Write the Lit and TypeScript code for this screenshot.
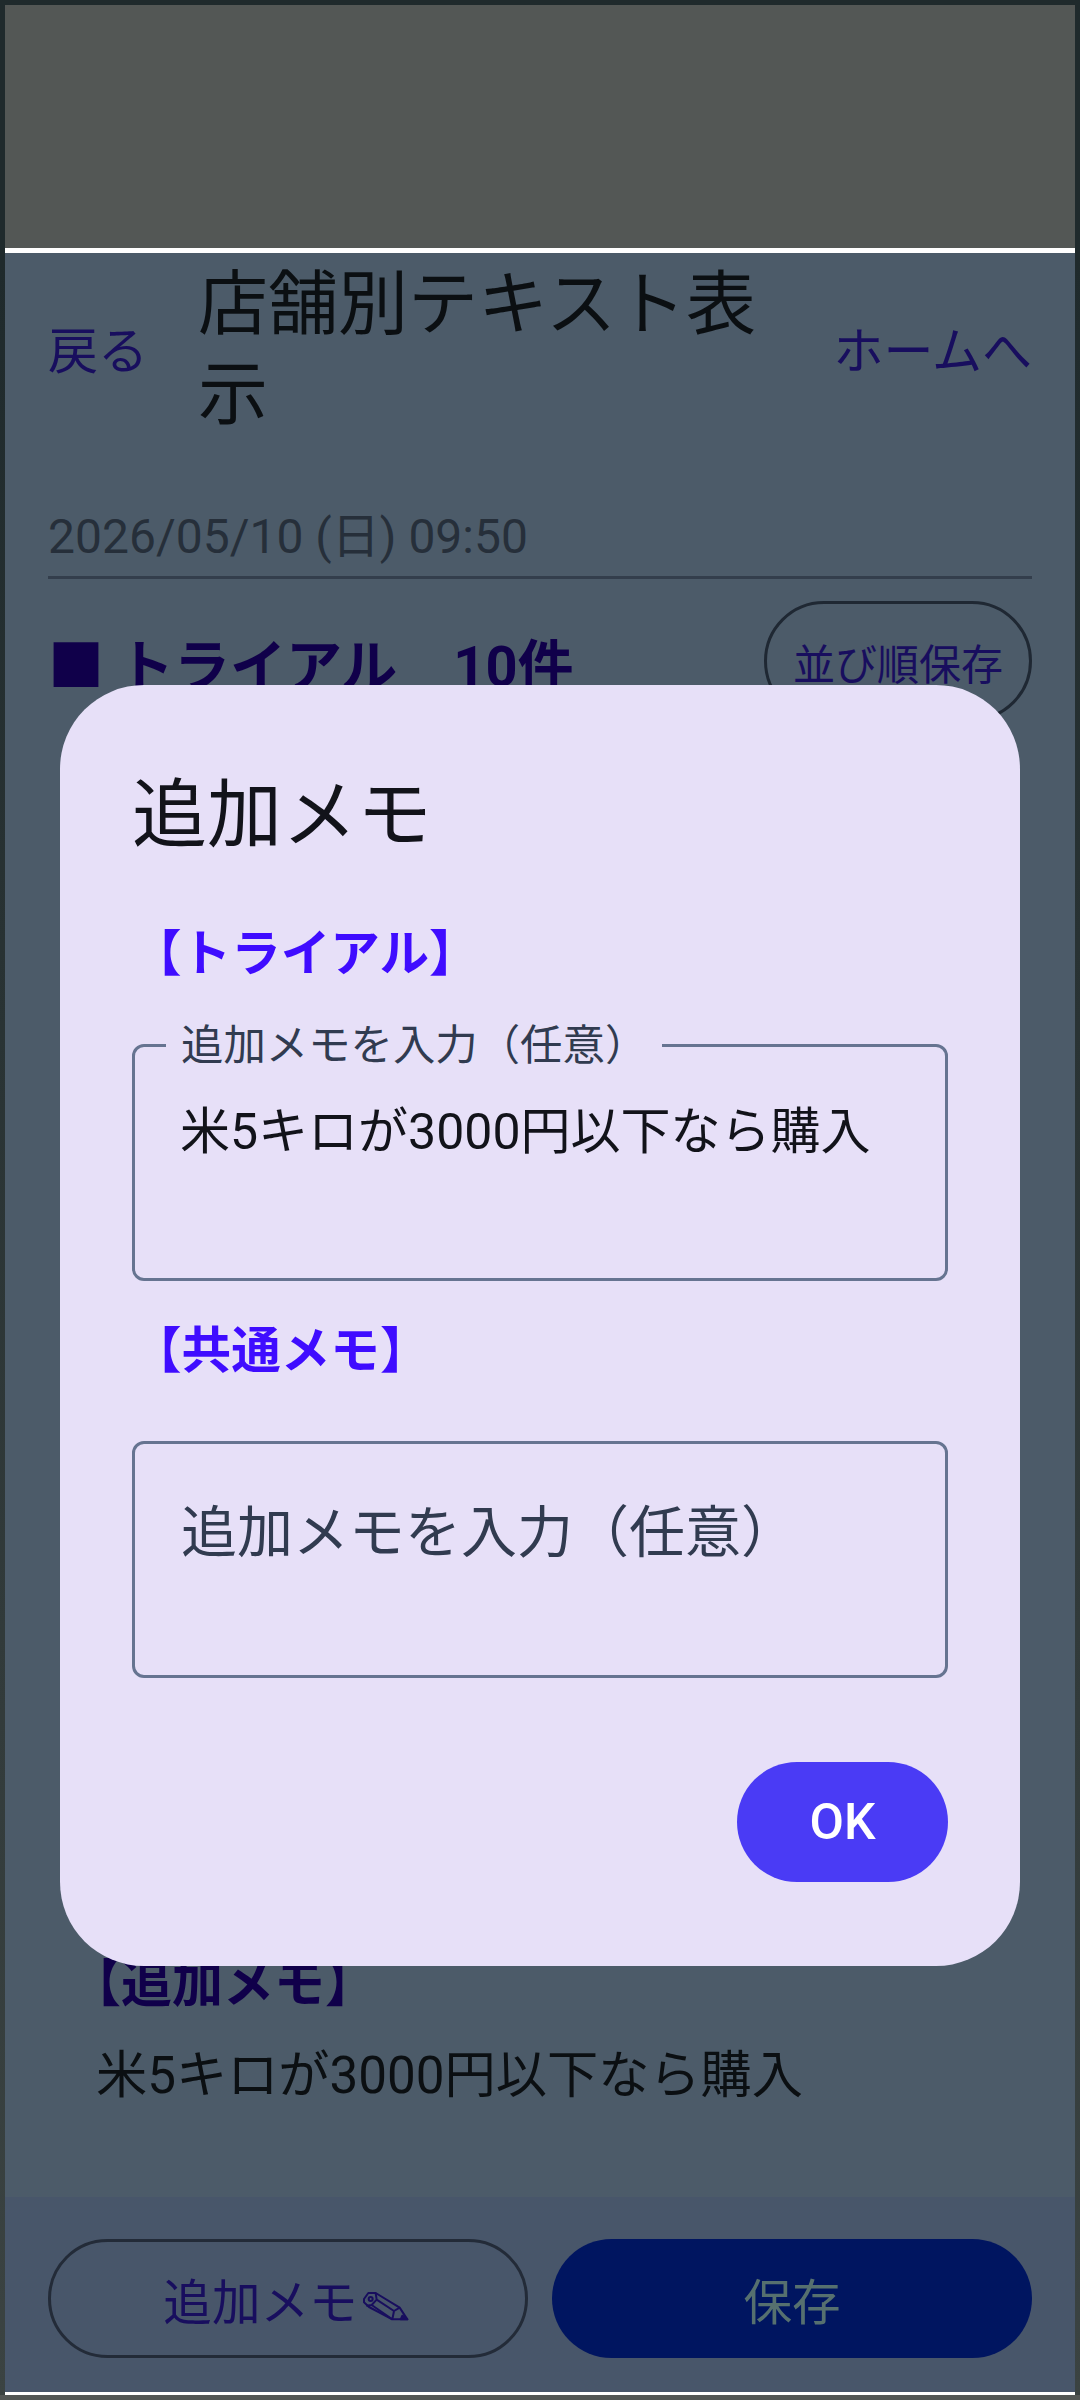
import { LitElement, html, css } from "lit";
import { customElement } from "lit/decorators.js";

@customElement("app-root")
export class AppRoot extends LitElement {
  static styles = css`
    :host {
      display: block;
      width: 1080px;
      height: 2400px;
      position: relative;
      overflow: hidden;
      background: #535755;
      font-family: Roboto, "Noto Sans CJK JP", sans-serif;
      color: #0b0f12;
    }
    .frame {
      box-sizing: border-box;
      height: 2400px;
      display: flex;
      flex-direction: column;
      padding: 5px 5px 0;
      background: linear-gradient(#1f2a2c 0, #1f2a2c 260px, #3b4342 100%);
    }
    .status { height: 243px; background: #535755; flex: none; }
    .rule { height: 5px; background: #fff; flex: none; }
    .page {
      flex: 1;
      min-height: 0;
      display: flex;
      flex-direction: column;
      background: #4c5b69;
    }
    .head {
      display: flex;
      align-items: center;
      padding: 0 43px;
      height: 195px;
      flex: none;
    }
    .link { font-size: 50px; color: #180e5e; white-space: nowrap; line-height: 60px; margin-top: 3px; }
    .title {
      flex: 1;
      font-size: 70px;
      line-height: 90px;
      padding: 0 60px 0 50px;
      margin-top: -2px;
    }
    .date {
      margin: 63px 43px 0;
      padding-bottom: 13px;
      border-bottom: 3px solid #333e4c;
      font-size: 48px;
      line-height: 52px;
      color: #262f3a;
    }
    .section {
      display: flex;
      align-items: flex-start;
      justify-content: space-between;
      padding: 22px 43px 0;
    }
    .section-title {
      font-size: 56px;
      line-height: 70px;
      font-weight: 700;
      color: #10004a;
      margin-top: 31px;
      white-space: pre;
    }
    .pill {
      box-sizing: border-box;
      border: 3px solid #1f2833;
      border-radius: 60px;
      height: 120px;
      width: 268px;
      display: flex;
      align-items: center;
      justify-content: center;
      font-size: 42px;
      color: #180e5e;
    }
    .spacer { flex: 1; }
    .memo { padding: 0 0 86px 91px; }
    .memo-label { font-size: 51px; line-height: 60px; font-weight: 700; color: #10004a; margin-left: -26px; }
    .memo-text { font-size: 51.2px; line-height: 70px; margin-top: 26px; }
    .foot {
      flex: none;
      height: 195px;
      background: #48566a;
      display: grid;
      grid-template-columns: 480px 480px;
      column-gap: 24px;
      padding: 42px 0 0 43px;
      box-sizing: border-box;
    }
    .btn {
      box-sizing: border-box;
      height: 119px;
      border-radius: 60px;
      display: flex;
      align-items: center;
      justify-content: center;
      font-size: 48.6px;
    }
    .btn.outline { border: 3px solid #232b38; color: #180e5e; }
    .btn.fill { background: #001560; color: #56706f; }
    .pencil { width: 54px; height: 42px; margin: 14px 0 0 1px; flex: none; }
    .pencil path, .pencil circle { fill: none; stroke: #180e5e; stroke-width: 6; stroke-linejoin: round; }
    .pencil .tip { fill: #180e5e; }
    .end { height: 3px; background: #fff; flex: none; }
    .under { height: 5px; background: #535755; flex: none; margin: 0 -5px; }

    .dialog {
      position: absolute;
      left: 60px;
      top: 685px;
      width: 960px;
      height: 1281px;
      box-sizing: border-box;
      background: #e7e0f8;
      border-radius: 84px;
      padding: 72px;
      display: flex;
      flex-direction: column;
    }
    .d-title { font-size: 75px; line-height: 96px; color: #12131a; margin-top: 10px; }
    .d-label {
      font-size: 49.6px;
      line-height: 60px;
      font-weight: 700;
      color: #3f0cff;
    }
    .first-label { margin-top: 61px; }
    .first-field { margin-top: 60px; }
    .second-label { margin-top: 40px; }
    .second-field { margin-top: 60px; }
    .field {
      box-sizing: border-box;
      height: 237px;
      border: 3px solid #667491;
      border-radius: 12px;
      padding: 0 46px;
      position: relative;
    }
    .float {
      position: absolute;
      top: -28px;
      left: 31px;
      padding: 0 15px;
      background: #e7e0f8;
      font-size: 42.4px;
      line-height: 54px;
      color: #313b50;
      white-space: nowrap;
    }
    .value { font-size: 50px; line-height: 70px; color: #12131a; margin-top: 50px; margin-left: -1px; }
    .ph { font-size: 56px; line-height: 72px; color: #313b50; margin-top: 53px; white-space: nowrap; }
    .actions { display: flex; justify-content: flex-end; margin-top: 84px; }
    .ok {
      width: 211px;
      height: 120px;
      border-radius: 60px;
      background: #4a3bf5;
      color: #fff;
      font-size: 50px;
      font-weight: 500;
      display: flex;
      align-items: center;
      justify-content: center;
    }
  `;

  render() {
    return html`
      <div class="frame">
        <div class="status"></div>
        <div class="rule"></div>
        <div class="page">
          <div class="head">
            <div class="link">戻る</div>
            <div class="title">店舗別テキスト表示</div>
            <div class="link">ホームへ</div>
          </div>
          <div class="date">2026/05/10 (日) 09:50</div>
          <div class="section">
            <div class="section-title">■ トライアル　10件</div>
            <div class="pill">並び順保存</div>
          </div>
          <div class="spacer"></div>
          <div class="memo">
            <div class="memo-label">【追加メモ】</div>
            <div class="memo-text">米5キロが3000円以下なら購入</div>
          </div>
          <div class="foot">
            <div class="btn outline">
              <span>追加メモ</span>
              <svg class="pencil" viewBox="0 0 162 126" aria-hidden="true">
                <path d="M15 42 L28 24 L50 24 L122 68 L145 103 L100 103 L30 66 L15 52 Z" />
                <path d="M50 24 L53 44 L38 60 L22 62 M53 44 L105 78 L122 68 M105 78 L100 103 M38 60 L100 103" />
                <path class="tip" d="M130 92 L145 103 L125 103 Z" />
                <circle cx="35" cy="42" r="6" />
              </svg>
            </div>
            <div class="btn fill">保存</div>
          </div>
        </div>
        <div class="end"></div>
        <div class="under"></div>
      </div>
      <div class="dialog">
        <div class="d-title">追加メモ</div>
        <div class="d-label first-label">【トライアル】</div>
        <div class="field first-field">
          <div class="float">追加メモを入力（任意）</div>
          <div class="value">米5キロが3000円以下なら購入</div>
        </div>
        <div class="d-label second-label">【共通メモ】</div>
        <div class="field second-field">
          <div class="ph">追加メモを入力（任意）</div>
        </div>
        <div class="actions"><div class="ok">OK</div></div>
      </div>
    `;
  }
}
